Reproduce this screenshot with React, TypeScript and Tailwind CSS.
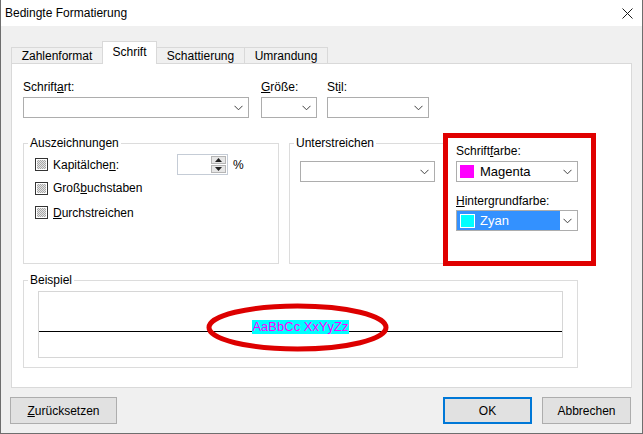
import React from 'react';

function Chevron() {
    return (
        <svg width="9" height="6" viewBox="0 0 9 6" className="shrink-0">
            <path d="M0.5 0.8 L4.5 4.8 L8.5 0.8" fill="none" stroke="#404040" strokeWidth="1" />
        </svg>
    );
}

function Combo({ width, children }: { width: string; children?: React.ReactNode }) {
    return (
        <div className={`${width} h-[21px] border border-[#adadad] bg-white flex items-center`}>
            <div className="flex-1 h-full flex items-center min-w-0">{children}</div>
            <div className="w-[17px] flex justify-center pr-[2px]">
                <Chevron />
            </div>
        </div>
    );
}

function Check({ children }: { children: React.ReactNode }) {
    return (
        <div className="flex items-center">
            <div className="w-[13px] h-[13px] border border-[#333] bg-white p-px">
                <div className="w-full h-full bg-[repeating-conic-gradient(#a8a8a8_0%_25%,#e4e4e4_0%_50%)] bg-[length:2px_2px]" />
            </div>
            <span className="ml-[5px] leading-4">{children}</span>
        </div>
    );
}

function Group({ title, className, children }: { title: string; className: string; children?: React.ReactNode }) {
    return (
        <fieldset className={`border border-[#dcdcdc] p-0 m-0 min-w-0 ${className}`}>
            <legend className="ml-[4px] px-[2px] leading-4">{title}</legend>
            {children}
        </fieldset>
    );
}

export default function App() {
    const tabs = [
        { label: 'Zahlenformat', w: 'w-[92px]' },
        { label: 'Schrift', w: 'w-[55px]' },
        { label: 'Schattierung', w: 'w-[89px]' },
        { label: 'Umrandung', w: 'w-[84px]' },
    ];

    return (
        <div className="w-[643px] h-[434px] bg-[#f0f0f0] border-x border-b border-[#6e6e6e] flex flex-col font-['Liberation_Sans',Arial,sans-serif] text-[12px] text-black overflow-hidden">
            {/* title bar */}
            <div className="h-[26px] bg-white flex items-center justify-between pl-[4px] pr-[9px] shrink-0">
                <span className="leading-4">Bedingte Formatierung</span>
                <svg width="11" height="11" viewBox="0 0 11 11">
                    <path d="M0.5 0.5 L10.5 10.5 M10.5 0.5 L0.5 10.5" stroke="#1a1a1a" strokeWidth="1" />
                </svg>
            </div>

            <div className="flex-1 flex flex-col px-[10px] pt-[15px]">
                {/* tabs */}
                <div className="flex items-end h-[23px] -mb-px">
                    {tabs.map((t, i) => {
                        const active = i === 1;
                        return (
                            <div
                                key={t.label}
                                className={`${t.w} ${i > 0 ? '-ml-px' : ''} border-x border-t border-[#d9d9d9] flex items-center justify-center leading-4 ${
                                    active ? 'h-[23px] bg-white relative z-10 pb-[3px]' : 'h-[17px] bg-[#f0f0f0]'
                                }`}
                            >
                                {t.label}
                            </div>
                        );
                    })}
                </div>

                {/* panel */}
                <div className="h-[325px] border border-[#d9d9d9] bg-white pl-[11px] pt-[15px] flex flex-col">
                    <div className="flex">
                        <div className="w-[226px] mr-[12px]">
                            <div className="leading-4 mb-[2px]">
                                Schrift<u>a</u>rt:
                            </div>
                            <Combo width="w-[226px]" />
                        </div>
                        <div className="w-[56px] mr-[10px]">
                            <div className="leading-4 mb-[2px]">
                                <u>G</u>röße:
                            </div>
                            <Combo width="w-[56px]" />
                        </div>
                        <div className="w-[102px]">
                            <div className="leading-4 mb-[2px]">
                                St<u>i</u>l:
                            </div>
                            <Combo width="w-[102px]" />
                        </div>
                    </div>

                    <div className="flex items-start mt-[15px]">
                        <Group title="Auszeichnungen" className="w-[256px] h-[129px] mt-[2px]">
                            <div className="pl-[11px] pt-[2px] flex flex-col">
                                <div className="h-[23px] flex items-center">
                                    <div className="w-[142px]">
                                        <Check>
                                            Kapitälche<u>n</u>:
                                        </Check>
                                    </div>
                                    <div className="w-[51px] h-[21px] border border-[#c5ccd6] bg-white flex justify-end items-center pr-px">
                                        <div className="w-[15px] h-[17px] flex flex-col gap-px">
                                            <div className="flex-1 bg-[#e6e6e6] border border-[#b5b5b5] flex items-center justify-center">
                                                <svg width="7" height="4" viewBox="0 0 7 4">
                                                    <path d="M0 4 L3.5 0 L7 4 Z" fill="#202020" />
                                                </svg>
                                            </div>
                                            <div className="flex-1 bg-[#e6e6e6] border border-[#b5b5b5] flex items-center justify-center">
                                                <svg width="7" height="4" viewBox="0 0 7 4">
                                                    <path d="M0 0 L3.5 4 L7 0 Z" fill="#202020" />
                                                </svg>
                                            </div>
                                        </div>
                                    </div>
                                    <span className="ml-[5px] leading-4">%</span>
                                </div>
                                <div className="h-[24px] flex items-center">
                                    <Check>
                                        Groß<u>b</u>uchstaben
                                    </Check>
                                </div>
                                <div className="h-[25px] flex items-center">
                                    <Check>
                                        <u>D</u>urchstreichen
                                    </Check>
                                </div>
                            </div>
                        </Group>

                        <Group title="Unterstreichen" className="w-[154px] h-[129px] mt-[2px] ml-[10px] border-r-0">
                            <div className="pl-[10px] pt-[10px]">
                                <Combo width="w-[135px]" />
                            </div>
                        </Group>

                        {/* highlighted colour settings */}
                        <div className="w-[153px] h-[133px] border-[5px] border-[#e00000] bg-white pl-[8px] pt-[5px] flex flex-col">
                            <div className="leading-4 mb-[2px]">
                                Schrift<u>f</u>arbe:
                            </div>
                            <Combo width="w-[122px]">
                                <div className="ml-[3px] w-[14px] h-[13px] bg-[#ff00ff]" />
                                <span className="ml-[6px] text-[13px] leading-4">Magenta</span>
                            </Combo>
                            <div className="leading-4 mt-[11px] mb-px">
                                <u>H</u>intergrundfarbe:
                            </div>
                            <Combo width="w-[122px]">
                                <div className="h-full flex-1 bg-[#3391ff] flex items-center">
                                    <div className="ml-[3px] w-[15px] h-[14px] bg-[#00ffff] border border-white" />
                                    <span className="ml-[5px] text-[13px] leading-4 text-white">Zyan</span>
                                </div>
                            </Combo>
                        </div>
                    </div>

                    <Group title="Beispiel" className="w-[555px] h-[96px] mt-[6px]">
                        <div className="px-[14px] pt-[3px]">
                            <div className="relative h-[67px] border border-[#d6d6d6] bg-white">
                                <div className="absolute left-0 right-0 top-[39px] h-px bg-black" />
                                <div className="flex justify-center pt-[28px]">
                                    <span className="relative z-10 bg-[#00ffff] text-[#ff00ff] text-[13px] leading-[14px] font-['Liberation_Sans',Arial,sans-serif]">
                                        AaBbCc XxYyZz
                                    </span>
                                </div>
                                <svg width="183" height="49" viewBox="0 0 183 49" className="absolute left-[167px] top-[11px] z-20">
                                    <ellipse cx="91.5" cy="24.5" rx="88.5" ry="21.5" fill="none" stroke="#dd0000" strokeWidth="5" />
                                </svg>
                            </div>
                        </div>
                    </Group>
                </div>

                {/* buttons */}
                <div className="flex mt-[9px] -ml-px">
                    <button className="w-[107px] h-[27px] bg-[#e1e1e1] border border-[#adadad] leading-4">
                        <u>Z</u>urücksetzen
                    </button>
                    <div className="flex-1" />
                    <button className="w-[89px] h-[27px] bg-[#e1e1e1] border-2 border-[#0078d7] leading-4">OK</button>
                    <button className="w-[89px] h-[27px] ml-[10px] mr-px bg-[#e1e1e1] border border-[#adadad] leading-4">
                        Abbrechen
                    </button>
                </div>
            </div>
        </div>
    );
}
